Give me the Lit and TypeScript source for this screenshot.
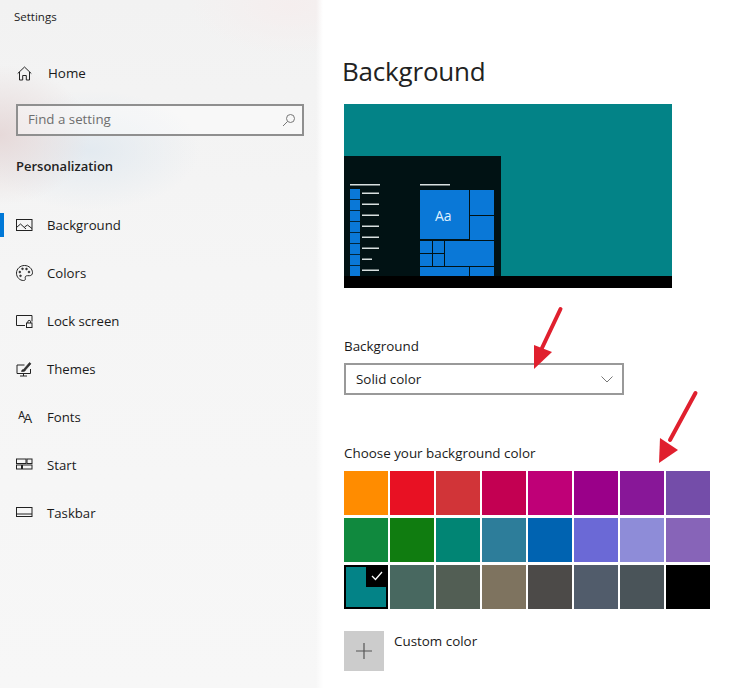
import { LitElement, html, css, svg } from "lit";
import { customElement } from "lit/decorators.js";

const ICONS: Record<string, unknown> = {
  Background: svg`<rect x=".5" y="2.500" width="15.500" height="11"/><path d="M.5 10.500l4-3.500 5.500 5M8.500 10l3-2 4.500 3.500"/>`,
  Colors: svg`<path d="M8.500.5c-4.400 0-8 3.400-8 7.600 0 4.400 3.400 7.400 7 7.400 1.600 0 2.200-1 1.800-2.200-.5-1.600.4-2.600 2.200-2.600h2c1.800 0 3-1.200 3-3 0-3.800-3.500-7.200-8-7.200z"/><circle class="fill" cx="3.800" cy="7" r=".9"/><circle class="fill" cx="6.500" cy="3.800" r=".9"/><circle class="fill" cx="10.500" cy="4" r=".9"/><circle class="fill" cx="13" cy="7" r=".9"/><circle class="fill" cx="4.500" cy="10.800" r=".9"/>`,
  "Lock screen": svg`<path d="M9 12.500H.5v-10h15.500v6"/><rect x="10.500" y="10" width="5.500" height="4.500"/><path d="M11.800 10V8.800a1.400 1.400 0 0 1 2.800 0V10"/>`,
  Themes: svg`<path d="M8.500 4H1v8.500h13.500V8M7.500 12.500v2.500M4 15h7"/><path d="M5.500 10.500c.2-1.500 1-2.200 2-2L13.500 1.500 15 2.800 9.500 9c.2 1-1.500 1.800-4 1.500z" class="fill"/>`,
  Start: svg`<rect x=".5" y="2" width="9.500" height="4.500"/><rect x="11" y="2" width="5" height="4.500"/><rect x=".5" y="8" width="5" height="4"/><rect x="6.500" y="8" width="9.500" height="4"/>`,
  Taskbar: svg`<rect x=".5" y="2.500" width="15.500" height="9"/><path d="M.5 9h15.500"/>`,
};

const ITEMS = ["Background", "Colors", "Lock screen", "Themes", "Fonts", "Start", "Taskbar"];

const SWATCHES = [
  "#ff8c00", "#e81123", "#d13438", "#c30052", "#bf0077", "#9a0089", "#881798", "#744da9",
  "#10893e", "#107c10", "#018574", "#2d7d9a", "#0063b1", "#6b69d6", "#8e8cd8", "#8764b8",
  "#038387", "#486860", "#525e54", "#7e735f", "#4c4a48", "#515c6b", "#4a5459", "#000000",
];

@customElement("start-preview")
class StartPreview extends LitElement {
  static styles = css`
    :host { display: block; width: 328px; height: 184px; }
    svg { display: block; }
    .aa { font: 14px "Open Sans", sans-serif; fill: #dff1ff; }
  `;
  render() {
    const blue = "#0a78d7";
    const lists = [0, 1, 2, 3, 4, 5, 6, 7];
    const tiles = [
      [76, 86, 49, 49], [126, 86, 24, 25], [126, 112, 24, 24],
      [76, 137, 12, 12], [89, 137, 11, 12], [76, 150, 12, 12], [89, 150, 11, 12],
      [101, 137, 49, 25], [76, 163, 49, 9], [126, 163, 24, 9],
    ];
    return html`<svg width="328" height="184" viewBox="0 0 328 184">
      <rect width="328" height="184" fill="#038387"/>
      <rect y="52" width="157" height="120" fill="#011214"/>
      <rect y="172" width="328" height="12" fill="#000"/>
      <rect x="6" y="80" width="30" height="1.500" fill="#d8e0e0"/>
      <rect x="76" y="80" width="30" height="1.500" fill="#d8e0e0"/>
      ${lists.map((i) => svg`
        <rect x="6" y=${85 + i * 11} width="10" height=${i === 7 ? 10 : 10.2} fill=${blue}/>
        <rect x="18" y=${88.5 + i * 11} width=${i === 6 ? 10 : 17} height="1.500" fill="#d8e0e0"/>`)}
      ${tiles.map((t) => svg`<rect x=${t[0]} y=${t[1]} width=${t[2]} height=${t[3]} fill=${blue}/>`)}
      <text class="aa" x="91" y="117">Aa</text>
    </svg>`;
  }
}

@customElement("app-root")
export class AppRoot extends LitElement {
  static styles = css`
    :host {
      display: flex;
      width: 732px;
      height: 688px;
      overflow: hidden;
      position: relative;
      background: #fff;
      font-family: "Open Sans", "Noto Sans", sans-serif;
      font-size: 13.4px;
      color: #1a1a1a;
    }
    .side {
      width: 323px;
      flex: none;
      box-sizing: border-box;
      background:
        linear-gradient(90deg, rgba(255,255,255,0) 316px, #fff 323px),
        radial-gradient(ellipse 90px 70px at 0px 135px, #e6d9d9 0%, rgba(230,217,217,0) 100%),
        radial-gradient(ellipse 110px 60px at 90px 150px, #e3eaf0 0%, rgba(227,234,240,0) 100%),
        radial-gradient(ellipse 100px 50px at 290px 5px, #f5eeee 0%, rgba(245,238,238,0) 100%),
        linear-gradient(#f2f2f2, #f5f5f5 40%, #f7f7f7);
      display: flex;
      flex-direction: column;
    }
    .title { font-size: 11.5px; height: 34px; padding: 9px 0 0 14px; box-sizing: border-box; color: #222; }
    .home { height: 48px; margin-top: 15px; display: flex; align-items: center; padding-left: 17px; gap: 16px; box-sizing: border-box; }
    .search {
      width: 288px;
      margin: 7px 0 0 16px; height: 32px; box-sizing: border-box;
      border: 2px solid #8f8f8f; background: rgba(255,255,255,.4);
      display: flex; align-items: center; justify-content: space-between;
      padding: 0 6px 3px 10px; color: #6e6e6e; font-size: 13.3px;
    }
    .search svg { margin-top: 3px; }
    .section { font-size: 13px; font-weight: 600; margin: 20px 0 0 16px; height: 20px; line-height: 20px; color: #222; }
    .nav { margin-top: 25px; display: flex; flex-direction: column; font-size: 13.2px; }
    .row { height: 48px; display: flex; align-items: center; padding-left: 16px; gap: 14px; position: relative; box-sizing: border-box; }
    .row .ico { width: 17px; height: 17px; display: flex; align-items: center; justify-content: center; flex: none; }
    .row.on::before { content: ""; position: absolute; left: 0; top: 12px; width: 4px; height: 24px; background: #0078d7; }
    .ico svg, .home svg, .search svg { display: block; fill: none; stroke: #222; stroke-width: 1; }
    .ico svg .fill { fill: #333; stroke-width: .6; }
    .fonts { font-family: "Liberation Sans", sans-serif; font-size: 13px; line-height: 17px; white-space: nowrap; letter-spacing: -1.5px; color: #222; }
    .fonts small { font-size: 10px; vertical-align: 4px; }
    .main { flex: 1; padding-left: 21px; display: flex; flex-direction: column; }
    h1 { font-weight: 400; font-size: 26px; letter-spacing: -.2px; line-height: 36px; margin: 53px 0 15px -2px; color: #222; }
    .label { height: 20px; line-height: 20px; }
    .lab1 { margin-top: 48px; }
    .select {
      margin-top: 7px; width: 280px; height: 32px; box-sizing: border-box;
      border: 2px solid #999; display: flex; align-items: center; justify-content: space-between;
      padding: 0 9px 0 10px;
    }
    .select svg { display: block; fill: none; stroke: #777; stroke-width: 1; }
    .lab2 { margin-top: 48px; }
    .grid { margin-top: 8px; display: grid; grid-template-columns: repeat(8, 44px); grid-auto-rows: 44px; column-gap: 2px; row-gap: 3px; }
    .sw { position: relative; }
    .sw.sel { border: 2px solid #000; box-sizing: border-box; }
    .tick { position: absolute; top: -2px; right: -2px; width: 22px; height: 22px; background: #000; display: flex; align-items: center; justify-content: center; }
    .tick svg { display: block; fill: none; stroke: #fff; stroke-width: 1.3; }
    .custom { margin-top: 22px; display: flex; gap: 10px; }
    .plus { width: 40px; height: 40px; background: #ccc; display: flex; align-items: center; justify-content: center; }
    .plus svg { display: block; stroke: #555; stroke-width: 1.2; }
    .custom span { line-height: 20px; }
    .arrow { position: absolute; left: 0; top: 0; pointer-events: none; }
    .arrow path { fill: #e0202e; }
    .arrow path.shaft { fill: none; stroke: #e0202e; stroke-width: 4; stroke-linecap: round; }
  `;

  render() {
    return html`
      <div class="side">
        <div class="title">Settings</div>
        <div class="home">
          <svg width="15" height="15" viewBox="0 0 15 15"><path d="M.7 7.500 7.500 1l6.800 6.500M2.500 6v8h3.200V9.500h3.600V14h3.200V6"/></svg>
          <span>Home</span>
        </div>
        <div class="search">
          <span>Find a setting</span>
          <svg width="14" height="14" viewBox="0 0 14 14" style="stroke:#777"><circle cx="8.500" cy="5.500" r="4"/><path d="M5.500 8.500 1 13"/></svg>
        </div>
        <div class="section">Personalization</div>
        <div class="nav">
          ${ITEMS.map((name, i) => html`
            <div class="row ${i === 0 ? "on" : ""}">
              <div class="ico">
                ${name === "Fonts"
                  ? html`<span class="fonts"><small>A</small>A</span>`
                  : html`<svg width="17" height="17" viewBox="0 0 17 17">${ICONS[name]}</svg>`}
              </div>
              <span>${name}</span>
            </div>`)}
        </div>
      </div>
      <div class="main">
        <h1>Background</h1>
        <start-preview></start-preview>
        <div class="label lab1">Background</div>
        <div class="select">
          <span>Solid color</span>
          <svg width="12" height="7" viewBox="0 0 12 7"><path d="M.5.5 6 6 11.500.5"/></svg>
        </div>
        <div class="label lab2">Choose your background color</div>
        <div class="grid">
          ${SWATCHES.map((c, i) => i === 16
            ? html`<div class="sw sel" style="background:${c}"><div class="tick"><svg width="12" height="10" viewBox="0 0 12 10"><path d="M1 5l3.500 3.500L11 1"/></svg></div></div>`
            : html`<div class="sw" style="background:${c}"></div>`)}
        </div>
        <div class="custom">
          <div class="plus"><svg width="16" height="16" viewBox="0 0 16 16"><path d="M8 0v16M0 8h16"/></svg></div>
          <span>Custom color</span>
        </div>
      </div>
      <svg class="arrow" width="732" height="688" viewBox="0 0 732 688">
        <path class="shaft" d="M560.500 309 542 348"/>
        <path d="M534 369 534 345 552 352Z"/>
        <path class="shaft" d="M695.500 393 670 440"/>
        <path d="M659 463 660 438 678 450Z"/>
      </svg>
    `;
  }
}
